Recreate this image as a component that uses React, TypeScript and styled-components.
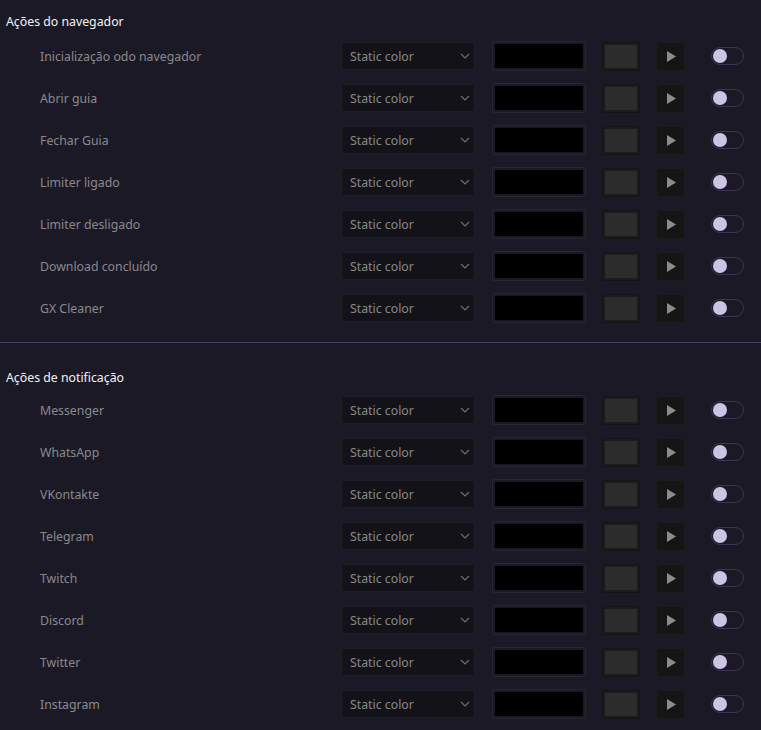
import React from 'react';
import styled, {createGlobalStyle} from "styled-components";

const GlobalStyle = createGlobalStyle`
  body {
    margin: 0;
    background: #1c1927;
    font-family: "Noto Sans", "Open Sans", sans-serif;
  }
`;

const browserActions = [
    'Inicialização odo navegador',
    'Abrir guia',
    'Fechar Guia',
    'Limiter ligado',
    'Limiter desligado',
    'Download concluído',
    'GX Cleaner',
];

const notificationActions = [
    'Messenger',
    'WhatsApp',
    'VKontakte',
    'Telegram',
    'Twitch',
    'Discord',
    'Twitter',
    'Instagram',
];

const Row = ({label}: { label: string }) => {
    return (
        <StyledRow>
            <RowLabel>{label}</RowLabel>
            <Select>
                <span>Static color</span>
                <svg width="10" height="6" viewBox="0 0 10 6">
                    <path d="M1 1l4 4 4-4" fill="none" stroke="#6f6f6f" strokeWidth="1.2"/>
                </svg>
            </Select>
            <ColorInput>
                <ColorFill/>
            </ColorInput>
            <Swatch>
                <SwatchFill/>
            </Swatch>
            <PlayButton>
                <svg width="9" height="11" viewBox="0 0 9 11">
                    <path d="M0 0L9 5.5L0 11Z" fill="#8c8c8c"/>
                </svg>
            </PlayButton>
            <Toggle>
                <Knob/>
            </Toggle>
        </StyledRow>
    );
};

export default function App() {
    return (
        <Page>
            <GlobalStyle/>
            <Section $top={12} $bottom={13}>
                <SectionTitle $gap={3}>Ações do navegador</SectionTitle>
                {browserActions.map(a => <Row key={a} label={a}/>)}
            </Section>
            <Divider/>
            <Section $top={25} $bottom={0}>
                <SectionTitle $gap={1}>Ações de notificação</SectionTitle>
                {notificationActions.map(a => <Row key={a} label={a}/>)}
            </Section>
        </Page>
    );
}

const Page = styled.div`
  width: 761px;
  height: 730px;
  overflow: hidden;
  background: #1c1927;
`;
const Section = styled.div<{ $top: number, $bottom: number }>`
  padding-top: ${p => p.$top}px;
  padding-bottom: ${p => p.$bottom}px;
  display: flex;
  flex-direction: column;
`;
const SectionTitle = styled.div<{ $gap: number }>`
  height: 20px;
  line-height: 20px;
  padding-left: 6px;
  margin-bottom: ${p => p.$gap}px;
  color: #f2f2f2;
  font-size: 12.3px;
`;
const Divider = styled.div`
  height: 1px;
  background: #463d6a;
`;
const StyledRow = styled.div`
  height: 42px;
  display: flex;
  align-items: center;
  padding-left: 40px;
`;
const RowLabel = styled.div`
  width: 301px;
  flex-shrink: 0;
  color: #8a8a8a;
  font-size: 12.3px;
`;
const Select = styled.div`
  width: 134px;
  height: 28px;
  flex-shrink: 0;
  margin-right: 17px;
  box-sizing: border-box;
  border: 1px solid #1f1d27;
  border-radius: 3px;
  background: #131219;
  display: flex;
  align-items: center;
  justify-content: space-between;
  padding: 0 4px 0 8px;
  color: #888888;
  font-size: 12.3px;
`;
const ColorInput = styled.div`
  width: 94px;
  height: 30px;
  flex-shrink: 0;
  margin-right: 16px;
  box-sizing: border-box;
  border: 1px solid #282530;
  border-radius: 2px;
  padding: 2px;
  display: flex;
`;
const ColorFill = styled.div`
  flex: 1;
  background: #000;
`;
const Swatch = styled.div`
  width: 38px;
  height: 29px;
  flex-shrink: 0;
  margin-right: 16px;
  box-sizing: border-box;
  border: 1px solid #141414;
  border-radius: 2px;
  background: #1b1b1b;
  padding: 2px;
  display: flex;
`;
const SwatchFill = styled.div`
  flex: 1;
  background: #2c2c2c;
`;
const PlayButton = styled.div`
  width: 29px;
  height: 29px;
  flex-shrink: 0;
  margin-right: 26px;
  box-sizing: border-box;
  border: 1px solid #1c1c1c;
  border-radius: 2px;
  background: #151515;
  display: flex;
  align-items: center;
  justify-content: center;
  padding-left: 1px;
`;
const Toggle = styled.div`
  width: 33px;
  height: 18px;
  flex-shrink: 0;
  box-sizing: border-box;
  border: 1px solid #3b3454;
  border-radius: 9px;
  position: relative;
`;
const Knob = styled.div`
  position: absolute;
  left: 1px;
  top: 1px;
  width: 14px;
  height: 14px;
  border-radius: 50%;
  background: #cdc4e4;
`;
